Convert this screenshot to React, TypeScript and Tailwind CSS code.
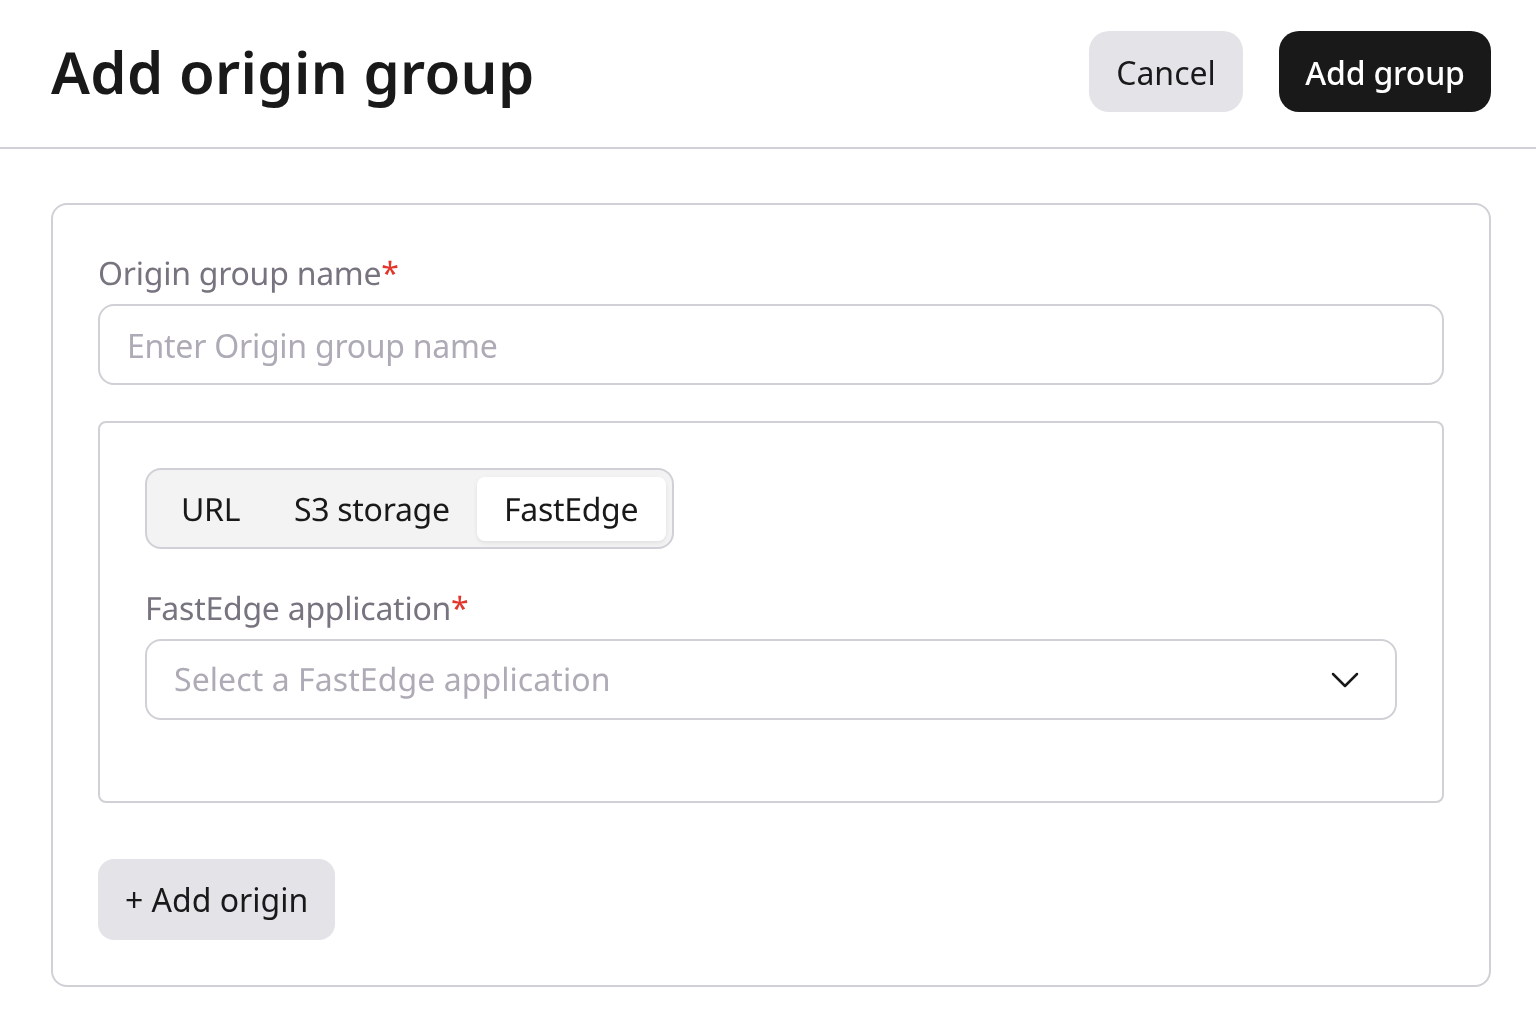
import { ChevronDown } from "lucide-react";

const Label = ({ children }: { children: string }) => (
  <label className="block h-[44px] text-[32px] leading-[44px] tracking-[-0.25px] text-[#78747f]">
    {children}
    <span className="text-[#e33529]">*</span>
  </label>
);

const App = () => {
  return (
    <div className="min-h-[1021px] font-['Noto_Sans',sans-serif] text-[#19191a] [text-rendering:geometricPrecision] will-change-transform">
      <header className="flex h-[149px] items-start justify-between border-b-2 border-[#d1d0d6] pl-[51px] pr-[45px] pt-[31px]">
        <h1 className="mt-[-1px] text-[58px] font-semibold leading-[84px] tracking-[0.33px]">Add origin group</h1>
        <div className="flex gap-[36px]">
          <button className="h-[81px] w-[154px] rounded-[20px] bg-[#e4e3e8] pt-[2px] text-[32px]">Cancel</button>
          <button className="h-[81px] w-[212px] rounded-[20px] bg-[#19191a] pt-[2px] text-[32px] font-medium tracking-[-0.2px] text-white">Add group</button>
        </div>
      </header>

      <main className="pl-[51px] pr-[45px] pt-[54px]">
        <div className="h-[784px] rounded-[16px] border-2 border-[#d1d0d6] px-[45px] pt-[47px]">
          <Label>Origin group name</Label>
          <input
            placeholder="Enter Origin group name"
            className="mt-[8px] block h-[81px] w-full rounded-[16px] border-2 border-[#d1d0d6] px-[27px] pt-[1px] text-[32px] tracking-[-0.25px] outline-none placeholder:text-[#aeabb6]"
          />

          <div className="mt-[36px] h-[382px] rounded-[8px] border-2 border-[#d1d0d6] px-[45px] pt-[45px]">
            <div className="flex h-[81px] w-[529px] items-center whitespace-nowrap rounded-[16px] border-2 border-[#d1d0d6] bg-[#f3f3f4] pl-[7px] text-[32px] tracking-[-0.3px]">
              <span className="w-[113px] pl-[27px] pt-[2px]">URL</span>
              <span className="w-[210px] pl-[27px] pt-[2px]">S3 storage</span>
              <span className="flex h-[64px] w-[189px] items-center rounded-[8px] bg-white pl-[27px] pt-[2px] shadow-[0_2px_4px_rgba(0,0,0,0.08)]">FastEdge</span>
            </div>

            <div className="mt-[38px]">
              <Label>FastEdge application</Label>
            </div>
            <div className="mt-[8px] flex h-[81px] items-center justify-between rounded-[16px] border-2 border-[#d1d0d6] pl-[27px] pr-[26px] text-[32px] tracking-[0.07px] text-[#aeabb6]">
              <span>Select a FastEdge application</span>
              <ChevronDown className="h-[48px] w-[48px] text-[#19191a]" strokeWidth={1.25} />
            </div>
          </div>

          <button className="mt-[56px] h-[81px] rounded-[16px] bg-[#e4e3e8] px-[27px] pt-[1px] text-[32px]">+ Add origin</button>
        </div>
      </main>
    </div>
  );
};

export default App;
